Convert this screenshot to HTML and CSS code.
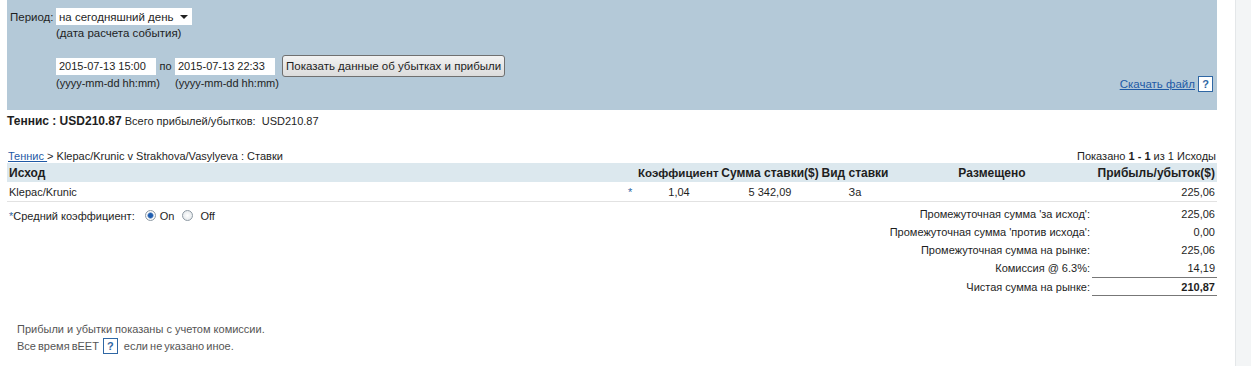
FILE: index.html
```html
<!DOCTYPE html>
<html lang="ru">
<head>
<meta charset="UTF-8">
<title>Прибыли и убытки</title>
<link rel="stylesheet" href="styles.css">
</head>
<body>

<div class="wrap">
  <div class="filters">
    <div class="row period">
      <span class="lbl">Период:</span>
      <div class="fields">
        <span class="select">на сегодняшний день <span class="caret"></span></span>
        <div class="hint">(дата расчета события)</div>
      </div>
    </div>
    <div class="row dates">
      <span class="lbl"></span>
      <div class="fields">
        <div class="inline">
          <span class="input">2015-07-13 15:00</span>
          <span class="po">по</span>
          <span class="input">2015-07-13 22:33</span>
          <span class="btn">Показать данные об убытках и прибыли</span>
        </div>
        <div class="hint inline fmts">
          <span class="fmt">(yyyy-mm-dd hh:mm)</span>
          <span class="fmt">(yyyy-mm-dd hh:mm)</span>
        </div>
      </div>
    </div>
    <div class="download">
      <a href="#">Скачать файл </a>
      <span class="help">?</span>
    </div>
  </div>

  <div class="total"><b>Теннис : USD210.87</b> Всего прибылей/убытков: &nbsp;USD210.87</div>

  <div class="crumbs">
    <span><a href="#">Теннис </a>&gt; Klepac/Krunic v Strakhova/Vasylyeva : Ставки</span>
    <span>Показано <b>1 - 1</b> из 1 Исходы</span>
  </div>

  <table class="bets">
    <colgroup>
      <col class="w-out">
      <col class="w-star">
      <col class="w-odds">
      <col class="w-stake">
      <col class="w-type">
      <col class="w-placed">
      <col class="w-pl">
    </colgroup>
    <tr>
      <th class="c-out">Исход</th>
      <th class="c-star"></th>
      <th class="c-odds">Коэффициент</th>
      <th class="c-stake">Сумма ставки($)</th>
      <th class="c-type">Вид ставки</th>
      <th class="c-placed">Размещено</th>
      <th class="c-pl">Прибыль/убыток($)</th>
    </tr>
    <tr>
      <td class="c-out">Klepac/Krunic</td>
      <td class="c-star">*</td>
      <td class="c-odds">1,04</td>
      <td class="c-stake">5 342,09</td>
      <td class="c-type">За</td>
      <td class="c-placed"></td>
      <td class="c-pl">225,06</td>
    </tr>
  </table>

  <div class="lower">
    <div class="avg">
      <span class="star">*</span>Средний коэффициент:
      <span class="radio on"></span><span class="opt">On</span>
      <span class="radio"></span><span class="opt">Off</span>
    </div>
    <table class="sums">
      <tr><td>Промежуточная сумма 'за исход':</td><td class="val">225,06</td></tr>
      <tr><td>Промежуточная сумма 'против исхода':</td><td class="val">0,00</td></tr>
      <tr><td>Промежуточная сумма на рынке:</td><td class="val">225,06</td></tr>
      <tr><td>Комиссия @ 6.3%:</td><td class="val">14,19</td></tr>
      <tr class="net"><td>Чистая сумма на рынке:</td><td class="val"><b>210,87</b></td></tr>
    </table>
  </div>

  <div class="notes">
    <div>Прибыли и убытки показаны с учетом комиссии.</div>
    <div class="tz">Все время вEET <span class="help">?</span> если не указано иное.</div>
  </div>
</div>

<div class="side"></div>

</body>
</html>
```

FILE: styles.css
```css
body {
  margin: 0;
  display: flex;
  min-height: 366px;
  font-family: "Liberation Sans", Arial, sans-serif;
  font-size: 11px;
  color: #1e1e1e;
  background-color: #fff;
}
a {
  color: #1f5aa6;
  text-decoration: underline;
}
.wrap {
  flex: 1;
  padding: 0 18px 0 7px;
}
.side {
  width: 15px;
  background-color: #f3f5f6;
  border-left: 1px solid #e4e7e9;
}

/* filter panel */
.filters {
  background-color: #b4c9d8;
  height: 110px;
  padding: 8px 4px 0 3px;
  box-sizing: border-box;
  position: relative;
}
.row {
  display: flex;
}
.lbl {
  width: 46px;
  padding-top: 3px;
  font-size: 11.5px;
}
.select {
  display: inline-flex;
  align-items: center;
  justify-content: space-between;
  box-sizing: border-box;
  height: 17px;
  width: 136px;
  padding: 0 4px 0 3px;
  background-color: #fff;
  font-size: 11.5px;
  white-space: nowrap;
}
.caret {
  border-left: 4px solid transparent;
  border-right: 4px solid transparent;
  border-top: 4px solid #222;
}
.hint {
  margin-top: 2px;
  font-size: 11.5px;
}
.dates {
  margin-top: 16px;
}
.inline {
  display: flex;
  align-items: center;
}
.input {
  display: inline-block;
  box-sizing: border-box;
  height: 17px;
  line-height: 17px;
  width: 100px;
  padding-left: 3px;
  background-color: #fff;
  font-size: 11px;
  white-space: nowrap;
}
.po {
  width: 19px;
  text-align: center;
}
.btn {
  margin-left: 7px;
  height: 20px;
  line-height: 20px;
  padding: 0 3px;
  border: 1px solid #707070;
  border-radius: 3px;
  background: linear-gradient(#f2f2f2, #dcdcdc);
  font-size: 11.5px;
  white-space: nowrap;
}
.fmts {
  margin-top: 0;
  font-size: 11px;
}
.fmt {
  width: 119px;
}
.download {
  position: absolute;
  right: 4px;
  bottom: 18px;
  display: flex;
  align-items: center;
  gap: 3px;
  font-size: 11.5px;
}
.help {
  display: inline-block;
  width: 13px;
  height: 14px;
  line-height: 14px;
  border: 1px solid #2f67a4;
  background-color: #fff;
  color: #2f67a4;
  font-weight: bold;
  text-align: center;
  font-size: 11px;
}

/* totals and table */
.total {
  margin-top: 4px;
}
.total b {
  font-size: 12px;
}
.crumbs {
  display: flex;
  justify-content: space-between;
  margin-top: 22px;
  padding: 0 1px;
}
.bets {
  width: 100%;
  table-layout: fixed;
  border-collapse: collapse;
  margin-top: 1px;
}
.w-star { width: 10px; }
.w-odds { width: 82px; }
.w-stake { width: 100px; }
.w-type { width: 70px; }
.w-placed { width: 204px; }
.w-pl { width: 123px; }
.bets th {
  background-color: #dce8ee;
  height: 19px;
  padding: 0;
  font-weight: bold;
  font-size: 12px;
  white-space: nowrap;
  overflow: visible;
}
.bets td {
  height: 19px;
  padding: 0;
  border-bottom: 1px solid #e2e2e2;
}
.c-out { text-align: left; padding-left: 2px !important; }
.c-star { color: #2f67a4; text-align: left; }
.c-odds { text-align: center; }
th.c-odds {
  text-align: right;
  padding-right: 3px !important;
  font-size: 11.5px !important;
}
.c-stake { text-align: center; }
.c-type { text-align: center; }
.c-placed { text-align: center; }
.c-pl { text-align: right; padding-right: 2px !important; }

.lower {
  display: flex;
  justify-content: space-between;
  margin-top: 3px;
}
.avg {
  display: flex;
  align-items: center;
  height: 21px;
  padding-left: 2px;
  font-size: 11px;
}
.star {
  color: #2f67a4;
}
.radio {
  display: inline-block;
  box-sizing: border-box;
  width: 11px;
  height: 11px;
  margin-left: 10px;
  border: 1px solid #8e9aa4;
  border-radius: 50%;
  background: radial-gradient(#fff, #dde2e6);
}
.radio.on {
  background: radial-gradient(circle, #1e5db0 0 2px, #9fb8d8 3px, #fff 3.5px, #dde2e6);
}
.opt {
  margin-left: 4px;
}
.radio + .opt + .radio {
  margin-left: 8px;
}
.radio + .opt + .radio + .opt {
  margin-left: 7px;
}
.sums {
  border-collapse: collapse;
}
.sums td {
  height: 18px;
  padding: 0 2px;
  text-align: right;
  font-size: 11px;
}
.sums .val {
  width: 120px;
  padding-left: 3px;
}
.net td {
  height: 17px;
}
.net .val {
  border-top: 1px solid #777;
  border-bottom: 1px solid #777;
}
.notes {
  margin-top: 25px;
  padding-left: 10px;
  color: #555;
  line-height: 17px;
}
.tz {
  word-spacing: -1px;
}
.notes .help {
  height: 14px;
  line-height: 14px;
  vertical-align: middle;
  margin: -3px 4px 0 2px;
}
```
